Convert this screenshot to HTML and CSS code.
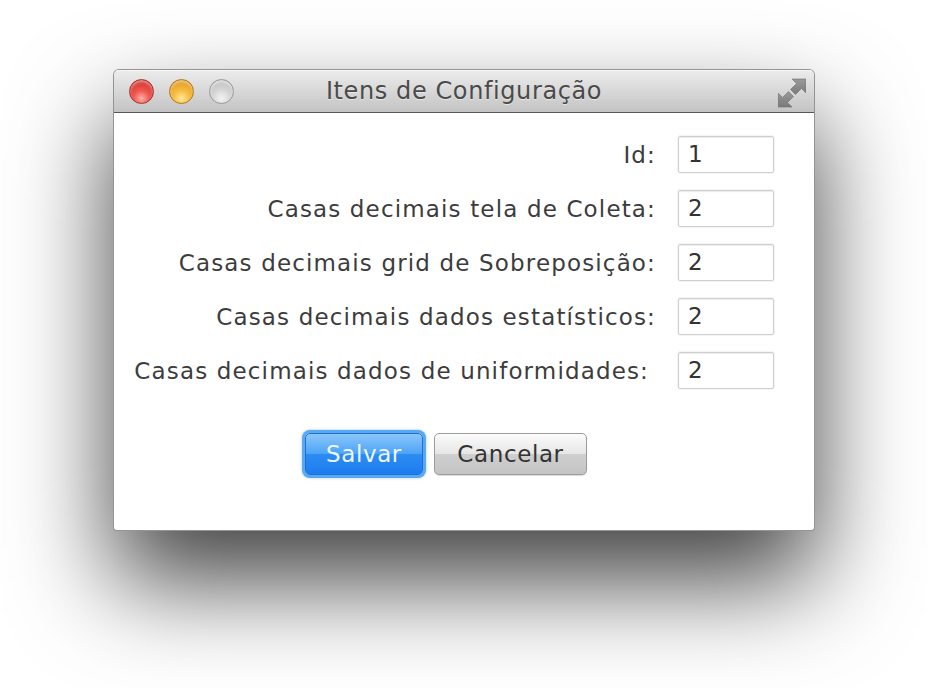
FILE: index.html
```html
<!DOCTYPE html>
<html lang="pt">
<head>
<meta charset="utf-8">
<title>Itens de Configuração</title>
<link rel="stylesheet" href="styles.css">
</head>
<body>
<div class="window">
  <div class="titlebar">
    <div class="lights">
      <span class="light red"></span>
      <span class="light yellow"></span>
      <span class="light gray"></span>
    </div>
    <div class="title">Itens de Configuração</div>
    <svg class="fullscreen" width="28" height="30" viewBox="0 0 28 30">
      <defs>
        <linearGradient id="ag" x1="0" y1="0" x2="0" y2="1">
          <stop offset="0" stop-color="#9a9a9a"/>
          <stop offset="1" stop-color="#7a7a7a"/>
        </linearGradient>
      </defs>
      <polygon points="14,1 28,1 28,15 23.5,10.5 17.5,16.5 12.5,11.5 18.5,5.5" fill="url(#ag)" stroke="#707070" stroke-width="0.6"/>
      <polygon points="14,29 0,29 0,15 4.5,19.5 10.5,13.5 15.5,18.5 9.5,24.5" fill="url(#ag)" stroke="#707070" stroke-width="0.6"/>
    </svg>
  </div>
  <div class="content">
    <div class="form">
      <label class="lbl">Id:</label>
      <div class="field">1</div>
      <label class="lbl">Casas decimais tela de Coleta:</label>
      <div class="field">2</div>
      <label class="lbl">Casas decimais grid de Sobreposição:</label>
      <div class="field">2</div>
      <label class="lbl">Casas decimais dados estatísticos:</label>
      <div class="field">2</div>
      <label class="lbl last">Casas decimais dados de uniformidades:</label>
      <div class="field">2</div>
    </div>
    <div class="buttons">
      <button class="btn primary">Salvar</button>
      <button class="btn">Cancelar</button>
    </div>
  </div>
</div>
</body>
</html>
```
FILE: styles.css
```css
html, body {
  margin: 0;
  padding: 0;
  background: #ffffff;
}
body {
  width: 928px;
  height: 688px;
  overflow: hidden;
  padding: 69px 0 0 113px;
  box-sizing: border-box;
  font-family: "DejaVu Sans", "Liberation Sans", sans-serif;
}
.window {
  width: 702px;
  height: 462px;
  box-sizing: border-box;
  border: 1px solid rgba(60, 60, 60, 0.55);
  border-radius: 6px 6px 4px 4px;
  background: #ffffff;
  box-shadow: 0 50px 100px rgba(0, 0, 0, 0.75);
  overflow: hidden;
  display: flex;
  flex-direction: column;
}
.titlebar {
  height: 43px;
  flex: none;
  box-sizing: border-box;
  border-bottom: 1px solid #555555;
  background: linear-gradient(#ececec, #d8d8d8 50%, #c3c3c3);
  box-shadow: inset 0 1px 0 #f8f8f8;
  display: flex;
  align-items: center;
  position: relative;
}
.lights {
  display: flex;
  gap: 15px;
  padding-left: 15px;
  padding-top: 1px;
}
.light {
  width: 25px;
  height: 25px;
  border-radius: 50%;
  box-sizing: border-box;
  display: block;
}
.red {
  border: 1px solid #a8302c;
  background: radial-gradient(circle at 50% 80%, #ffb0a8 0%, #f05a52 35%, #d93a34 70%, #b8241f 100%);
  box-shadow: inset 0 2px 3px rgba(255,255,255,0.5);
}
.yellow {
  border: 1px solid #b07a1a;
  background: radial-gradient(circle at 50% 80%, #ffe6a0 0%, #f7bf45 35%, #e8a126 70%, #c2821a 100%);
  box-shadow: inset 0 2px 3px rgba(255,255,255,0.5);
}
.gray {
  border: 1px solid #9a9a9a;
  background: radial-gradient(circle at 50% 80%, #f4f4f4 0%, #d6d6d6 40%, #c4c4c4 75%, #aaaaaa 100%);
  box-shadow: inset 0 2px 3px rgba(255,255,255,0.6);
}
.title {
  position: absolute;
  left: 0;
  right: 0;
  top: 0;
  line-height: 43px;
  text-align: center;
  font-size: 24px;
  letter-spacing: 0.6px;
  color: #4a4a4a;
  text-shadow: 0 1px 0 rgba(255,255,255,0.5);
  pointer-events: none;
}
.fullscreen {
  position: absolute;
  right: 8px;
  top: 8px;
}
.content {
  flex: 1;
  padding: 23px 40px 0 10px;
}
.form {
  display: grid;
  grid-template-columns: 1fr 96px;
  column-gap: 22px;
  row-gap: 17px;
  align-items: center;
}
.lbl {
  text-align: right;
  font-size: 23px;
  letter-spacing: 1.15px;
  color: #3c3c3c;
  white-space: nowrap;
}
.lbl.last {
  padding-right: 7px;
}
.field {
  height: 37px;
  box-sizing: border-box;
  border: 1px solid #cfcfcf;
  border-radius: 2px;
  box-shadow: inset 0 1px 1px rgba(0,0,0,0.08), 0 0 0 1px rgba(0,0,0,0.04);
  padding-left: 9px;
  font-size: 23px;
  line-height: 35px;
  color: #333333;
}
.buttons {
  display: flex;
  gap: 11px;
  padding-left: 181px;
  margin-top: 44px;
}
.btn {
  height: 42px;
  box-sizing: border-box;
  font-family: "DejaVu Sans", "Liberation Sans", sans-serif;
  font-size: 23px;
  letter-spacing: 0.6px;
  border-radius: 5px;
  padding: 0;
  cursor: default;
  width: 153px;
  border: 1px solid #9c9c9c;
  background: linear-gradient(#fbfbfb, #e6e6e6 50%, #cfcfcf 51%, #c4c4c4);
  color: #333333;
  box-shadow: 0 1px 1px rgba(0,0,0,0.15);
}
.btn.primary {
  width: 118px;
  border: 1px solid #1b6fd0;
  background: linear-gradient(#8cc6fb, #4ba3f6 50%, #2d8cf2 51%, #1c7cf0);
  color: #eef6ff;
  box-shadow: 0 0 0 3px #5aa8f2, 0 0 3px 3px rgba(70,150,240,0.5);
}
```
